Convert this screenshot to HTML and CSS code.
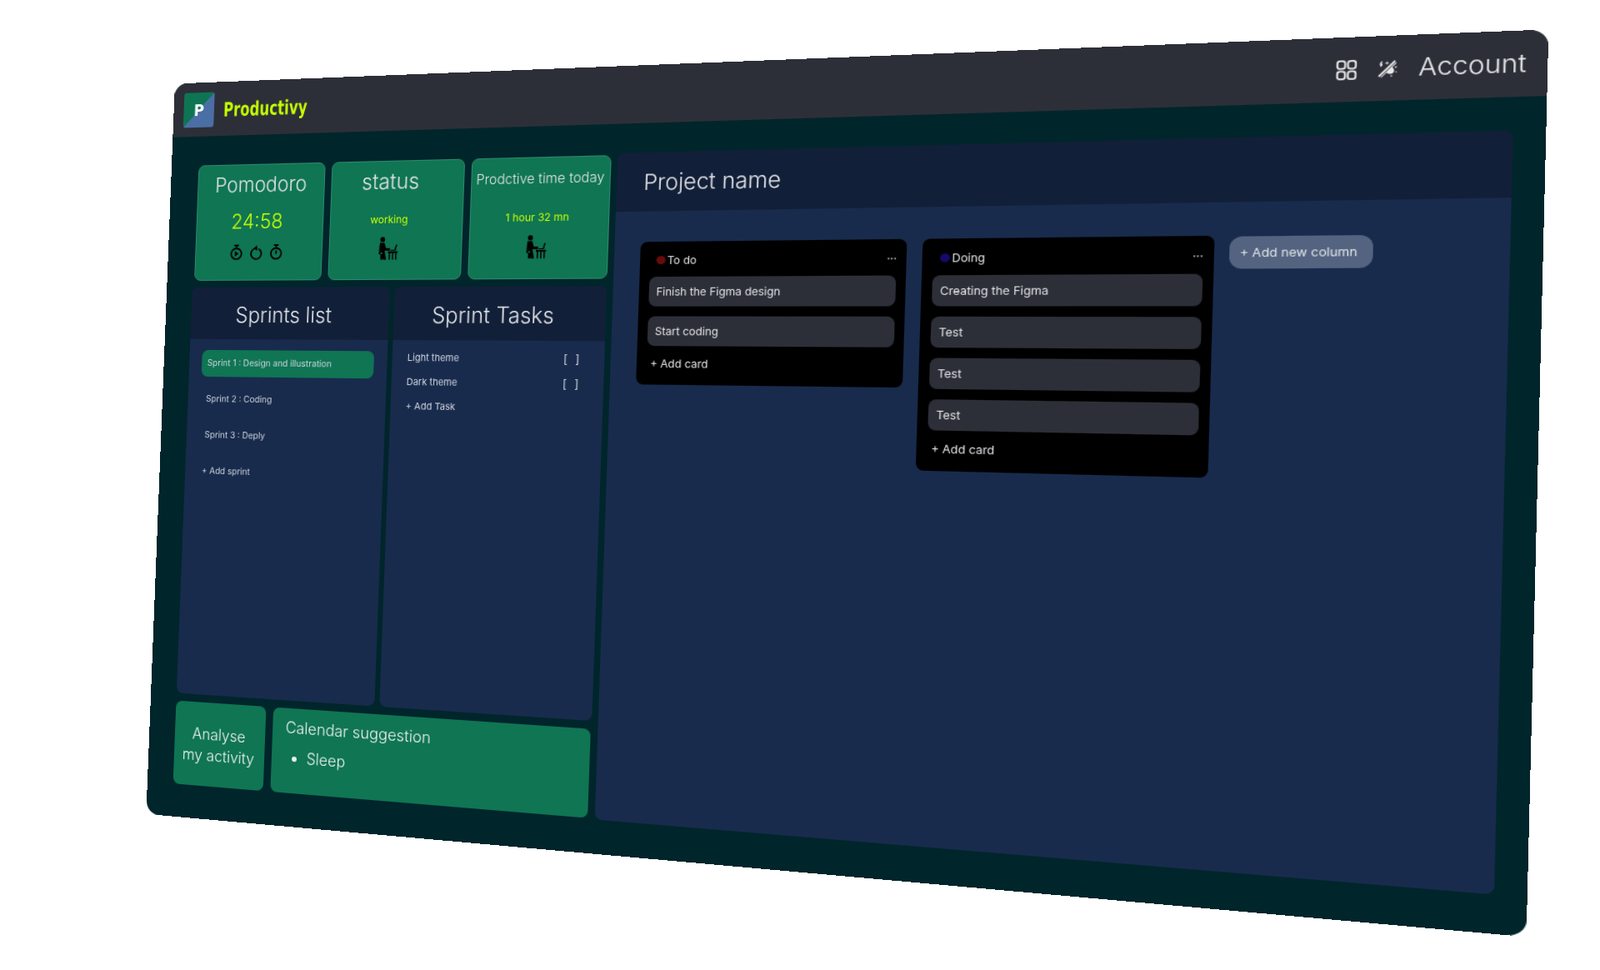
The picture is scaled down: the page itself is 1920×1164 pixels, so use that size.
FILE: index.html
```html
<!DOCTYPE html>
<html lang="en">
<head>
  <meta charset="UTF-8" />
  <title>Productivy</title>
  <link rel="stylesheet" href="styles.css">
</head>
<body>

<div class="screen">

  <header class="topbar">
    <div class="brand">
      <div class="logo">P</div>
      <span class="brand-name">Productivy</span>
    </div>
    <div class="topbar-right">
      <svg class="icon-grid" viewBox="0 0 20 24" fill="none" stroke="#e8e8e8" stroke-width="1.9">
        <rect x="1" y="2" width="7.6" height="8.6" rx="2.6" />
        <rect x="11.4" y="2" width="7.6" height="8.6" rx="2.6" />
        <rect x="1" y="13.4" width="7.6" height="8.6" rx="2.6" />
        <rect x="11.4" y="13.4" width="7.6" height="8.6" rx="2.6" />
      </svg>
      <svg class="icon-theme" viewBox="0 0 18 20" fill="none" stroke="#e8e8e8" stroke-width="1.5">
        <path d="M1.5 18.5 L16.5 2.5" stroke-width="1.9" />
        <path d="M3.6 19.5 L17.5 4.6" stroke-width="1" />
        <path d="M5 2 C2 3 1.4 6.4 3.6 8.6 C4 7.6 4.4 7 5 6.4 C4 5 4 3.4 5 2 Z" fill="#e8e8e8" stroke="none" />
        <path d="M9 2.4 L9.6 4 L11.2 4.4 L9.6 5 L9 6.6 L8.4 5 L6.8 4.4 L8.4 4 Z" fill="#e8e8e8" stroke="none" />
        <path d="M8.4 14.6 L13.6 9 C16 10.6 16.4 13.6 14.6 15.2 C12.8 16.6 10 16.4 8.4 14.6 Z" fill="#e8e8e8" stroke="none" />
        <path d="M16.4 9.4 L18 8.8 M17 14 L18 14.6 M13 17.4 L13.4 19" stroke-width="1.2" />
      </svg>
      <span class="account">Account</span>
    </div>
  </header>

  <div class="content">

    <!-- left column -->
    <div class="left-col">
      <div class="stats">
        <div class="stat stat-pomodoro">
          <div class="stat-label">Pomodoro</div>
          <div class="stat-value big">24:58</div>
          <div class="timer-icons">
            <svg class="icon-watch" viewBox="0 0 16 20" fill="none" stroke="#000" stroke-width="2">
              <path d="M5 1 H11 M8 1 V4" />
              <circle cx="8" cy="11.5" r="6.8" />
              <path d="M6 8 L11.2 11.5 L6 15 Z" fill="#000" stroke="none" />
            </svg>
            <svg class="icon-reset" viewBox="0 0 16 20" fill="none" stroke="#000" stroke-width="2">
              <path d="M6 5.2 A6.8 6.8 0 1 0 11 5.6" />
              <path d="M9 1 L4.6 5 L9.4 8 Z" fill="#000" stroke="none" />
            </svg>
            <svg class="icon-watch" viewBox="0 0 16 20" fill="none" stroke="#000" stroke-width="2">
              <path d="M5 1 H11 M8 1 V4" />
              <circle cx="8" cy="11.5" r="6.8" />
              <path d="M8 7.5 V12" />
            </svg>
          </div>
        </div>
        <div class="stat stat-status">
          <div class="stat-label mid">status</div>
          <div class="stat-value">working</div>
          <svg class="icon-desk" viewBox="0 0 24 28" fill="#000">
            <circle cx="5" cy="3" r="3" />
            <path d="M1.6 7 H7.4 L9.4 13.4 H14.4 V16.6 H7.8 L10 27.4 H6.4 L4.8 18.6 H3 V21 H0.6 L1.6 7 Z" />
            <path d="M2.8 20.6 H6 V27.4 H2.8 Z" />
            <path d="M12 17.4 H24 V19.4 H22.8 V27.4 H21.2 V19.4 H18.8 V27.4 H17.2 V19.4 H14.8 V27.4 H13.2 V19.4 H12 Z" />
            <path d="M20 15.6 L21.8 9.4 H23.4 L21.5 16.6 H15.4 V15.6 Z" />
          </svg>
        </div>
        <div class="stat stat-today">
          <div class="stat-label small">Prodctive time today</div>
          <div class="stat-value">1 hour 32 mn</div>
          <svg class="icon-desk" viewBox="0 0 24 28" fill="#000">
            <circle cx="5" cy="3" r="3" />
            <path d="M1.6 7 H7.4 L9.4 13.4 H14.4 V16.6 H7.8 L10 27.4 H6.4 L4.8 18.6 H3 V21 H0.6 L1.6 7 Z" />
            <path d="M2.8 20.6 H6 V27.4 H2.8 Z" />
            <path d="M12 17.4 H24 V19.4 H22.8 V27.4 H21.2 V19.4 H18.8 V27.4 H17.2 V19.4 H14.8 V27.4 H13.2 V19.4 H12 Z" />
            <path d="M20 15.6 L21.8 9.4 H23.4 L21.5 16.6 H15.4 V15.6 Z" />
          </svg>
        </div>
      </div>

      <div class="lists">
        <section class="list-panel">
          <h2 class="list-title">Sprints list</h2>
          <ul class="sprints">
            <li class="sprint active">Sprint 1 : Design and illustration</li>
            <li class="sprint">Sprint 2 : Coding</li>
            <li class="sprint">Sprint 3 : Deply</li>
            <li class="sprint add">+ Add sprint</li>
          </ul>
        </section>
        <section class="list-panel">
          <h2 class="list-title">Sprint Tasks</h2>
          <ul class="tasks">
            <li class="task"><span>Light theme</span><span class="check">[ ]</span></li>
            <li class="task"><span>Dark theme</span><span class="check">[ ]</span></li>
            <li class="task">+ Add Task</li>
          </ul>
        </section>
      </div>

      <div class="bottom-row">
        <div class="analyse">Analyse<br>my activity</div>
        <div class="calendar">
          <div class="calendar-title">Calendar suggestion</div>
          <ul class="calendar-list">
            <li>Sleep</li>
          </ul>
        </div>
      </div>
    </div>

    <!-- project board -->
    <main class="project">
      <h1 class="project-title">Project name</h1>
      <div class="columns">
        <div class="column">
          <div class="column-head">
            <span class="dot dot-red"></span>
            <span class="column-name">To do</span>
            <span class="more">···</span>
          </div>
          <div class="card">Finish the Figma design</div>
          <div class="card">Start coding</div>
          <div class="add-card">+ Add card</div>
        </div>
        <div class="column">
          <div class="column-head">
            <span class="dot dot-blue"></span>
            <span class="column-name">Doing</span>
            <span class="more">···</span>
          </div>
          <div class="card">Creating the Figma</div>
          <div class="card">Test</div>
          <div class="card">Test</div>
          <div class="card">Test</div>
          <div class="add-card">+ Add card</div>
        </div>
        <button class="add-column">+ Add new column</button>
      </div>
    </main>

  </div>
</div>

</body>
</html>
```

FILE: styles.css
```css
html, body {
  margin: 0;
  padding: 0;
  height: 100%;
  background: white;
  overflow: hidden;
}
body {
  font-family: 'Inter', 'Liberation Sans', sans-serif;
  color: #e2e4e8;
}

/* the whole app is a screen lying in perspective */
.screen {
  width: 1440px;
  height: 880px;
  background: #00252b;
  border-radius: 16px;
  overflow: hidden;
  transform-origin: 0 0;
  transform: matrix3d(
    0.894083, -0.050042, 0, -0.00013490,
    -0.040761, 0.987148, 0, -0.0000088557,
    0, 0, 1, 0,
    209.9, 100.5, 0, 1
  );
}

.topbar {
  height: 65px;
  background: #2d2f38;
  display: flex;
  align-items: center;
  justify-content: space-between;
  padding: 0 18px 0 13px;
}
.brand {
  display: flex;
  align-items: center;
  gap: 12px;
}
.logo {
  width: 39px;
  height: 42px;
  border-radius: 3px;
  background: linear-gradient(to bottom right, #0e7553 50%, #4a6fa5 50%);
  color: white;
  font-family: 'DejaVu Sans Condensed', 'DejaVu Sans', sans-serif;
  font-stretch: condensed;
  font-weight: bold;
  font-size: 20px;
  display: flex;
  align-items: center;
  justify-content: center;
}
.brand-name {
  display: inline-block;
  font-family: 'DejaVu Sans Condensed', 'DejaVu Sans', sans-serif;
  font-stretch: condensed;
  font-weight: bold;
  font-size: 19px;
  color: #c6ff00;
  transform: scale(1.02, 1.25);
  transform-origin: 0 50%;
}
.topbar-right {
  display: flex;
  align-items: center;
}
.icon-grid {
  width: 20px;
  height: 22px;
  margin-right: 17px;
}
.icon-theme {
  width: 18px;
  height: 19px;
  margin-right: 19px;
}
.account {
  font-size: 24px;
  font-weight: 300;
  letter-spacing: 0.1px;
  color: #eceef0;
}

.content {
  display: flex;
  gap: 7px;
  padding: 33px 28px 0 33px;
}
.left-col {
  width: 498px;
}

.stats {
  display: flex;
  gap: 8px;
  padding: 2px 0 0 2px;
}
.stat {
  width: 160px;
  height: 139px;
  box-sizing: border-box;
  background: #0f7553;
  border: 1px solid #2f8a6c;
  border-radius: 8px;
  display: flex;
  flex-direction: column;
  align-items: center;
}
.stat-status {
  padding-right: 16px;
}
.stat-today {
  padding-right: 4px;
}
.stat-label {
  height: 46px;
  line-height: 47px;
  font-size: 24px;
  font-weight: 300;
  color: #dfe3e4;
}
.stat-label.mid {
  font-size: 25px;
}
.stat-label.small {
  margin-left: 3px;
  font-size: 15.5px;
  white-space: nowrap;
}
.stat-value {
  height: 44px;
  line-height: 44px;
  font-size: 12px;
  color: #c6ff00;
}
.stat-value.big {
  font-size: 24px;
  font-weight: 300;
  margin-right: 6px;
}
.timer-icons {
  display: flex;
  align-items: center;
  gap: 8px;
  height: 28px;
  margin-right: 6px;
}
.icon-watch, .icon-reset {
  width: 17px;
  height: 19px;
}
.icon-desk {
  width: 26px;
  height: 27px;
  margin-top: -2px;
}

.lists {
  display: flex;
  gap: 6px;
  margin-top: 8px;
}
.list-panel {
  width: 246px;
  height: 486px;
  background: #182b4d;
  border-radius: 8px;
  overflow: hidden;
}
.list-title {
  margin: 0;
  height: 62px;
  line-height: 66px;
  padding-right: 13px;
  background: #121f38;
  text-align: center;
  font-size: 25px;
  font-weight: 300;
  color: #dfe3e8;
}
.sprints, .tasks {
  list-style: none;
  margin: 0;
  padding: 0;
  font-size: 11px;
  color: #cfd4dc;
}
.sprints {
  padding: 13px 16px;
}
.sprint {
  height: 32px;
  line-height: 32px;
  margin-bottom: 11px;
  padding-left: 7px;
  border-radius: 8px;
  font-size: 10.5px;
}
.sprint.active {
  background: #0f7553;
}
.sprint.add {
  padding-left: 5px;
}
.tasks {
  padding: 7px 28px 0 18px;
}
.task {
  display: flex;
  justify-content: space-between;
  height: 28px;
  line-height: 27px;
}
.check {
  font-size: 13px;
  word-spacing: 5px;
}

.bottom-row {
  display: flex;
  gap: 9px;
  margin-top: 9px;
}
.analyse {
  width: 114px;
  height: 99px;
  box-sizing: border-box;
  padding: 25px 2px 0 0;
  background: #0f7553;
  border-radius: 8px;
  text-align: center;
  font-size: 18.2px;
  font-weight: 300;
  line-height: 24.5px;
  color: #eef1f0;
  white-space: nowrap;
}
.calendar {
  width: 374px;
  height: 99px;
  box-sizing: border-box;
  padding: 10px 16px;
  background: #0f7553;
  border-radius: 8px;
  font-weight: 300;
  color: #eef1f0;
}
.calendar-title {
  font-size: 18.3px;
  line-height: 24px;
}
.calendar-list {
  margin: 12px 0 0;
  padding-left: 27px;
  font-size: 18px;
  line-height: 24px;
}

.project {
  width: 874px;
  height: 744px;
  background: #182b4d;
  border-radius: 8px;
  overflow: hidden;
}
.project-title {
  margin: 0;
  height: 66px;
  line-height: 67px;
  padding-left: 30px;
  background: #121f38;
  font-size: 24.4px;
  font-weight: 300;
  color: #e2e4e8;
}
.columns {
  display: flex;
  align-items: flex-start;
  gap: 16px;
  padding: 34px 0 0 29px;
}
.column {
  width: 283px;
  box-sizing: border-box;
  padding: 0 10px 0 11px;
  background: #000;
  border-radius: 8px;
  font-size: 12px;
}
.column-head {
  display: flex;
  align-items: center;
  gap: 2px;
  height: 39px;
  padding: 1px 0 0 7px;
  box-sizing: border-box;
}
.dot {
  width: 10px;
  height: 9px;
  border-radius: 50%;
}
.dot-red {
  background: #6b0a0a;
}
.dot-blue {
  background: #140a6b;
}
.column-name {
  flex: 1;
}
.more {
  font-size: 10px;
  font-weight: bold;
  line-height: 10px;
}
.card {
  height: 33px;
  line-height: 33px;
  margin-bottom: 11px;
  padding-left: 8px;
  background: #2d2f38;
  border-radius: 8px;
}
.add-card {
  height: 43px;
  line-height: 40px;
  padding-left: 4px;
  margin-top: -11px;
}
.add-column {
  width: 130px;
  height: 33px;
  margin: 1px 0 0 -2px;
  padding: 0 4px 0 0;
  border: none;
  border-radius: 12px;
  background: #536380;
  color: #dfe3e8;
  font-family: inherit;
  font-size: 12px;
}
```
